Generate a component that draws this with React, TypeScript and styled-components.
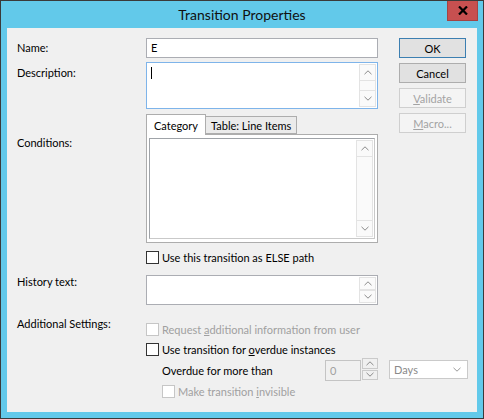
import React from "react"
import styled, { createGlobalStyle, css } from "styled-components"

const GlobalStyle = createGlobalStyle`
    html, body {
        margin: 0;
        padding: 0;
        background: #ffffff;
    }
    body {
        font-family: Lato, "Noto Sans", sans-serif;
        font-size: 11px;
        color: #000000;
    }
    * {
        box-sizing: border-box;
    }
`

const Window = styled.div`
    width: 484px;
    height: 419px;
    border: 1px solid #3a3a3a;
    background: #62c9ea;
    display: flex;
    flex-direction: column;
`

const TitleBar = styled.div`
    height: 27px;
    display: grid;
    grid-template-columns: 1fr auto 1fr;
    align-items: start;
`

const Title = styled.div`
    grid-column: 2;
    font-size: 14px;
    line-height: 27px;
    color: #101010;
`

const CloseButton = styled.div`
    grid-column: 3;
    justify-self: end;
    width: 31px;
    height: 20px;
    margin-right: 5px;
    background: #c75050;
    border: 1px solid #a34444;
    border-top: none;
    display: flex;
    align-items: center;
    justify-content: center;
`

const Client = styled.div`
    flex: 1;
    margin: 0 6px 6px 6px;
    background: #f0f0f0;
    padding: 10px 11px 0 10px;
    display: grid;
    grid-template-columns: 129px 232px 21px 67px;
    grid-template-rows: 24px 52px 137px 24px 47px 21px 17px 24px auto;
    align-items: start;
`

const Label = styled.div<{ $offset: number }>`
    grid-column: 1;
    line-height: 16px;
    margin-top: ${p => p.$offset}px;
    white-space: nowrap;
`

const Field = styled.div`
    grid-column: 2;
`

const TextBox = styled.div<{ $height: number; $focused?: boolean }>`
    height: ${p => p.$height}px;
    background: #ffffff;
    border: 1px solid ${p => (p.$focused ? "#7eb4ea" : "#abadb3")};
    display: flex;
    line-height: 16px;
`

const TextValue = styled.div`
    flex: 1;
    padding: 1px 4px;
`

const Caret = styled.span`
    display: inline-block;
    width: 1px;
    height: 12px;
    margin-top: 3px;
    background: #000000;
`

const ScrollBar = styled.div`
    width: 17px;
    margin: 1px 1px 1px 0;
    background: #fafafa;
    border: 1px solid #e3e3e3;
    display: flex;
    flex-direction: column;
`

const ScrollArrow = styled.div<{ $end?: boolean }>`
    height: 16px;
    flex-shrink: 1;
    min-height: 0;
    display: flex;
    align-items: center;
    justify-content: center;
    ${p =>
        p.$end
            ? css`border-top: 1px solid #e3e3e3;`
            : css`border-bottom: 1px solid #e3e3e3;`}
`

const ScrollTrack = styled.div`
    flex: 1;
`

const ButtonStack = styled.div`
    grid-column: 4;
    grid-row: 1 / 4;
    display: flex;
    flex-direction: column;
    gap: 5px;
`

const Button = styled.div<{ $default?: boolean; $disabled?: boolean }>`
    height: 20px;
    display: flex;
    align-items: center;
    justify-content: center;
    background: #e1e1e1;
    border: 1px solid #adadad;
    ${p =>
        p.$default &&
        css`
            border-color: #3c7fb1;
        `}
    ${p =>
        p.$disabled &&
        css`
            background: #f4f4f4;
            border-color: #cfcfcf;
            color: #a3a3a3;
        `}
`

const Key = styled.span`
    text-decoration: underline;
`

const TabBlock = styled.div`
    display: flex;
    flex-direction: column;
`

const TabStrip = styled.div`
    height: 20px;
    display: flex;
    align-items: flex-end;
    position: relative;
    z-index: 1;
`

const Tab = styled.div<{ $active?: boolean }>`
    height: ${p => (p.$active ? 21 : 18)}px;
    margin-bottom: ${p => (p.$active ? -1 : 0)}px;
    padding: 0 ${p => (p.$active ? 7 : 5)}px;
    display: flex;
    align-items: center;
    background: ${p => (p.$active ? "#ffffff" : "#ebebeb")};
    border: 1px solid #adadad;
    border-bottom: ${p => (p.$active ? "none" : "1px solid #adadad")};
    margin-left: ${p => (p.$active ? 0 : -1)}px;
`

const TabPanel = styled.div`
    height: 109px;
    background: #ffffff;
    border: 1px solid #adadad;
    padding: 3px 2px 3px 2px;
`

const ListBox = styled.div`
    height: 100%;
    border: 1px solid #9fa3a8;
    border-right-color: #c9c9c9;
    border-bottom-color: #c9c9c9;
    display: flex;
`

const CheckRow = styled.label<{ $disabled?: boolean; $indent?: number }>`
    grid-column: 2 / 5;
    display: flex;
    align-items: center;
    gap: 3px;
    height: 13px;
    margin-left: ${p => p.$indent ?? 0}px;
    margin-top: ${p => (p.$disabled ? 1 : 0)}px;
    white-space: nowrap;
    line-height: 13px;
    color: ${p => (p.$disabled ? "#a0a0a0" : "#000000")};
`

const Box = styled.span<{ $disabled?: boolean }>`
    width: 13px;
    height: 13px;
    flex: none;
    background: #ffffff;
    border: 1px solid ${p => (p.$disabled ? "#c6c6c6" : "#333333")};
`

const OverdueRow = styled.div`
    grid-column: 2 / 5;
    display: flex;
    align-items: center;
    height: 21px;
`

const OverdueText = styled.div`
    flex: 1;
    padding-left: 16px;
`

const SpinEdit = styled.div`
    width: 36px;
    height: 21px;
    background: #f0f0f0;
    border: 1px solid #c4c4c4;
    color: #a0a0a0;
    padding: 2px 4px;
    line-height: 15px;
`

const SpinButtons = styled.div`
    width: 16px;
    margin-left: 1px;
    height: 22px;
    margin-top: -3px;
    display: flex;
    flex-direction: column;
    gap: 1px;
`

const SpinButton = styled.div`
    flex: 1;
    border: 1px solid #cacaca;
    display: flex;
    align-items: center;
    justify-content: center;
`

const Select = styled.div`
    width: 79px;
    height: 19px;
    margin-left: 11px;
    margin-top: -2px;
    margin-right: -2px;
    background: #ffffff;
    border: 1px solid #cacaca;
    color: #8a8a8a;
    display: flex;
    align-items: center;
    justify-content: space-between;
    padding: 0 6px 0 4px;
`

function Chevron({ down, color = "#8a8a8a" }: { down?: boolean; color?: string }) {
    return (
        <svg width="8" height="5" viewBox="0 0 8 5">
            <path
                d={down ? "M0.5 0.8 L4 4.2 L7.5 0.8" : "M0.5 4.2 L4 0.8 L7.5 4.2"}
                fill="none"
                stroke={color}
                strokeWidth="1"
            />
        </svg>
    )
}

function Scroll() {
    return (
        <ScrollBar>
            <ScrollArrow>
                <Chevron />
            </ScrollArrow>
            <ScrollTrack />
            <ScrollArrow $end>
                <Chevron down />
            </ScrollArrow>
        </ScrollBar>
    )
}

function Check({ children, disabled, indent }: { children: React.ReactNode; disabled?: boolean; indent?: number }) {
    return (
        <CheckRow $disabled={disabled} $indent={indent}>
            <Box $disabled={disabled} />
            <span>{children}</span>
        </CheckRow>
    )
}

export default function App() {
    return (
        <>
            <GlobalStyle />
            <Window>
                <TitleBar>
                    <Title>Transition Properties</Title>
                    <CloseButton>
                        <svg width="10" height="9" viewBox="0 0 10 9">
                            <path d="M1 0.5 L9 8.5 M9 0.5 L1 8.5" stroke="#000" strokeWidth="2.2" />
                        </svg>
                    </CloseButton>
                </TitleBar>

                <Client>
                    <Label $offset={2}>Name:</Label>
                    <Field>
                        <TextBox $height={20}>
                            <TextValue>E</TextValue>
                        </TextBox>
                    </Field>
                    <ButtonStack>
                        <Button $default>OK</Button>
                        <Button>Cancel</Button>
                        <Button $disabled>
                            <span><Key>V</Key>alidate</span>
                        </Button>
                        <Button $disabled>
                            <span><Key>M</Key>acro...</span>
                        </Button>
                    </ButtonStack>

                    <Label $offset={3}>Description:</Label>
                    <Field>
                        <TextBox $height={47} $focused>
                            <TextValue>
                                <Caret />
                            </TextValue>
                            <Scroll />
                        </TextBox>
                    </Field>

                    <Label $offset={21}>Conditions:</Label>
                    <Field>
                        <TabBlock>
                            <TabStrip>
                                <Tab $active>Category</Tab>
                                <Tab>Table: Line Items</Tab>
                            </TabStrip>
                            <TabPanel>
                                <ListBox>
                                    <TextValue />
                                    <Scroll />
                                </ListBox>
                            </TabPanel>
                        </TabBlock>
                    </Field>

                    <Check>Use this transition as ELSE path</Check>

                    <Label $offset={-1}>History text:</Label>
                    <Field>
                        <TextBox $height={30}>
                            <TextValue />
                            <Scroll />
                        </TextBox>
                    </Field>

                    <Label $offset={-6}>Additional Settings:</Label>
                    <Check disabled>
                        Request <Key>a</Key>dditional information from user
                    </Check>

                    <Check>
                        Use transition for <Key>o</Key>verdue instances
                    </Check>

                    <OverdueRow>
                        <OverdueText>Overdue for more than</OverdueText>
                        <SpinEdit>0</SpinEdit>
                        <SpinButtons>
                            <SpinButton>
                                <Chevron />
                            </SpinButton>
                            <SpinButton>
                                <Chevron down />
                            </SpinButton>
                        </SpinButtons>
                        <Select>
                            <span>Days</span>
                            <Chevron down color="#9a9a9a" />
                        </Select>
                    </OverdueRow>

                    <Check disabled indent={16}>
                        Make transition <Key>i</Key>nvisible
                    </Check>
                </Client>
            </Window>
        </>
    )
}
